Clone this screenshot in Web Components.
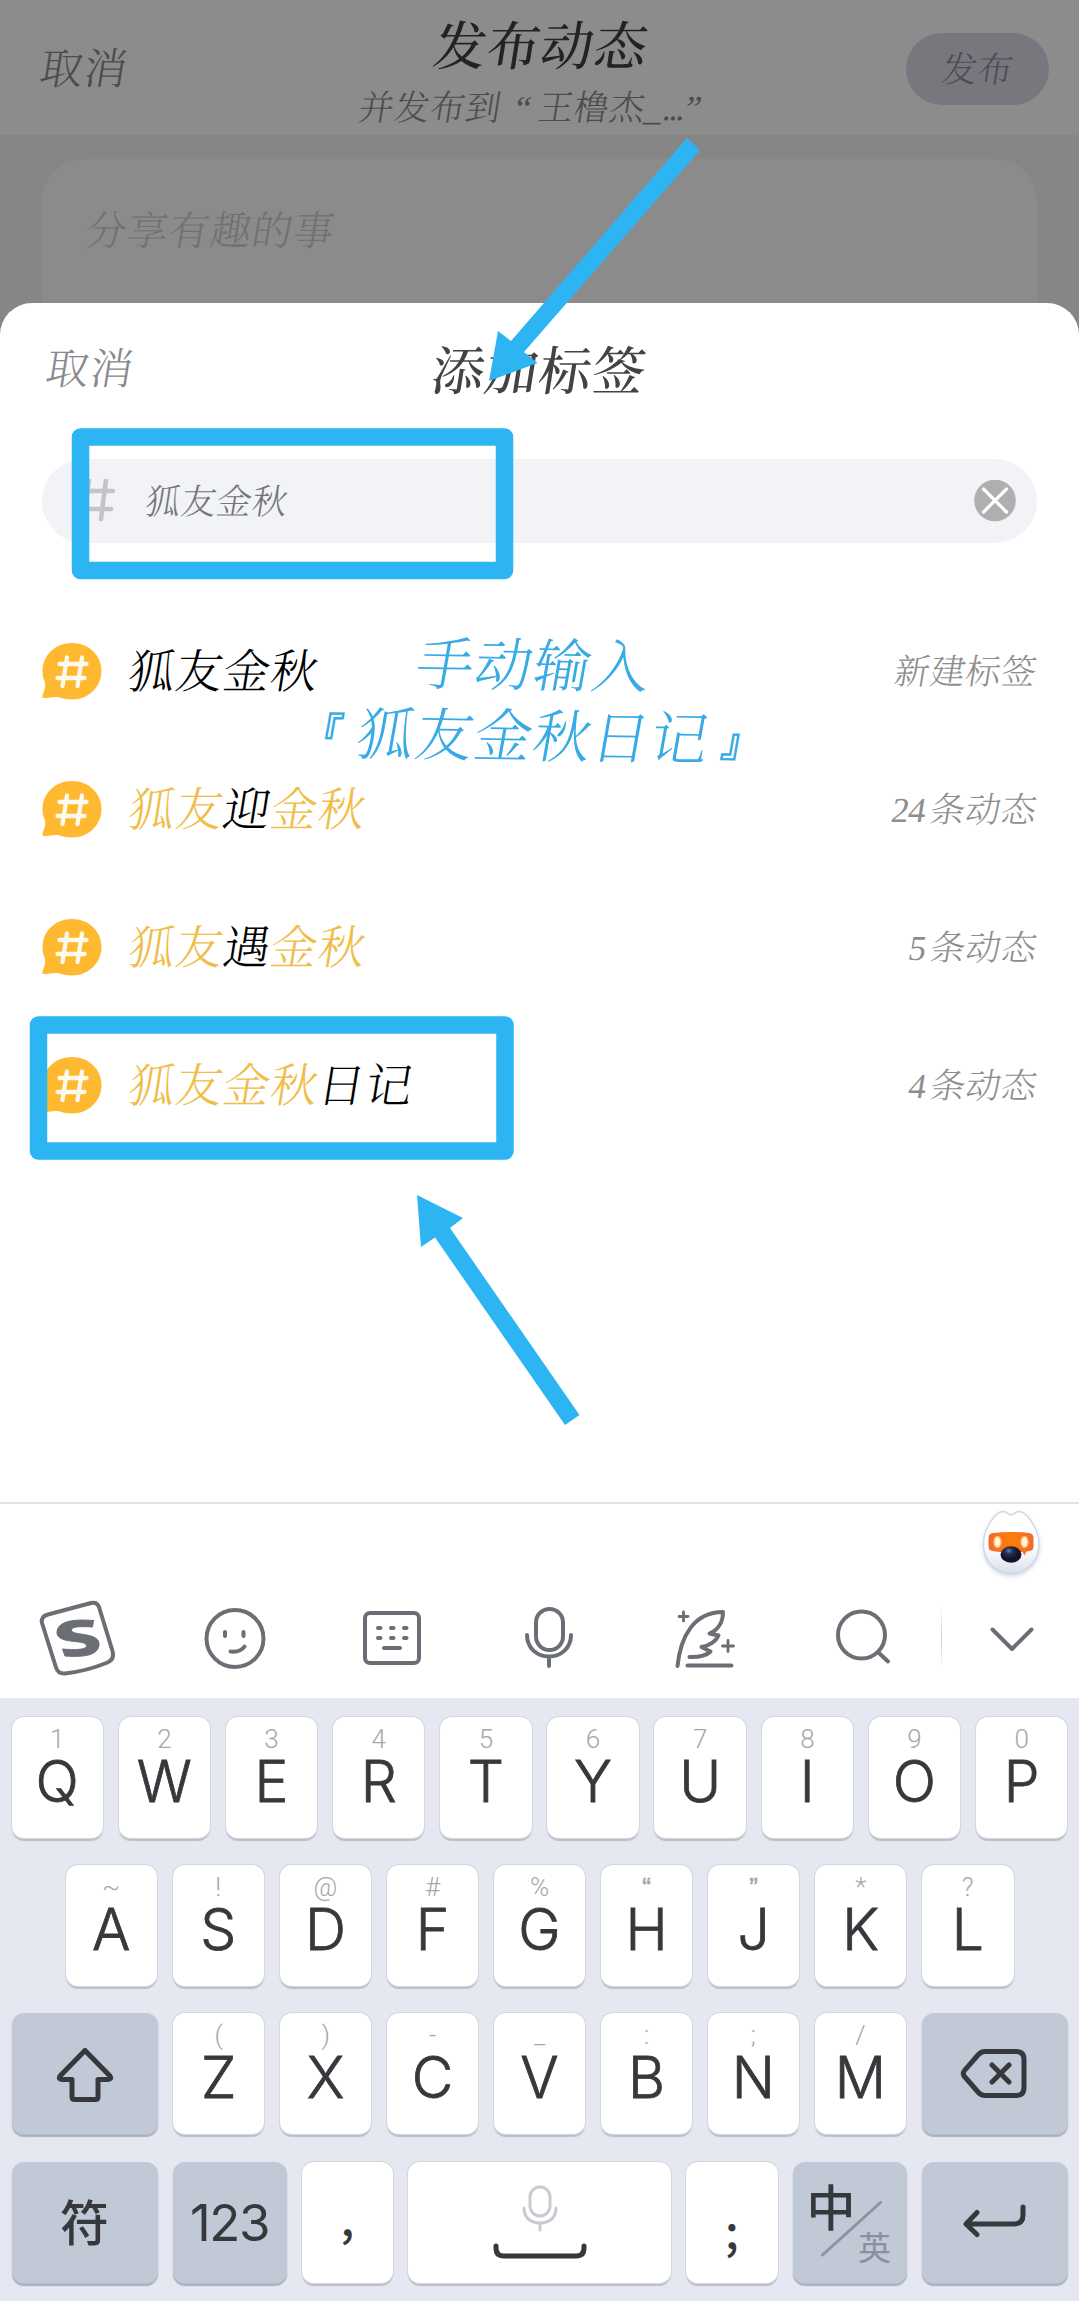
<!DOCTYPE html>
<html lang="zh-CN">
<head>
<meta charset="utf-8">
<title>添加标签</title>
<style>
html,body{margin:0;padding:0}
body{width:1079px;height:2301px;overflow:hidden;background:#fff;
 font-family:"Liberation Serif","Noto Serif CJK SC","Noto Sans CJK SC",serif;font-weight:300}
</style>
</head>
<body>
<tag-app></tag-app>
<script>
const define=(name,html)=>{
  const t=document.createElement('template');t.innerHTML=html;
  customElements.define(name,class extends HTMLElement{
    constructor(){super();this.attachShadow({mode:'open'}).append(t.content.cloneNode(true));}
  });
};

define('post-header',`<style>
:host{display:flex;height:135px;background:#8c8c8c;box-sizing:border-box;padding:0 30px 0 40px;justify-content:space-between}
.cancel{width:143px;height:50px;font-size:43px;letter-spacing:1px;line-height:50px;margin-top:45px;color:#4b4c4e;white-space:nowrap;transform:skewX(-9deg)}
.mid{display:flex;flex-direction:column;align-items:center;white-space:nowrap;margin-left:-6px}
h1{margin:17px 0 0;font-size:52.5px;letter-spacing:1px;line-height:60px;font-weight:500;color:#232325;transform:skewX(-9deg)}
p{margin:13px 0 0 -10px;font-size:35px;letter-spacing:.6px;line-height:38px;color:#4b4c4e;width:356px;display:flex;transform:skewX(-9deg)}
.q1{width:30px;padding-right:7px;text-align:right}.q2{padding-left:2px}
.dots{letter-spacing:-2px}
button{all:unset;width:143px;height:72px;border-radius:36px;background:#79777e;margin-top:33px;text-align:center;font-size:35.5px;line-height:74px;color:#4d4b54}
button span{display:block;transform:skewX(-9deg)}
</style>
<span class="cancel">取消</span>
<div class="mid"><h1>发布动态</h1><p><span>并发布到</span><span class="q1">“</span><span>王橹杰</span><span>_</span><span class="dots">...</span><span class="q2">”</span></p></div>
<button><span>发布</span></button>`);

define('post-draft',`<style>
:host{display:block;height:210px;background:#868686;box-sizing:border-box;padding:24px 42px 0}
div{height:186px;border-radius:42px 42px 0 0;background:#8b8b8b;box-sizing:border-box;padding:48px 44px 0}
p{margin:0;font-size:40.500px;letter-spacing:1px;line-height:50px;color:#717174;transform:skewX(-9deg)}
</style><div><p>分享有趣的事</p></div>`);

define('sheet-header',`<style>
:host{display:flex;justify-content:space-between;height:156px;padding:0 46px}
span{width:150px;height:50px;font-size:43px;letter-spacing:1px;line-height:50px;margin-top:42px;color:#88898c;transform:skewX(-9deg)}
h2{margin:39px 0 0;height:60px;font-size:52.5px;letter-spacing:1px;line-height:60px;font-weight:500;color:#424346;transform:skewX(-9deg)}
</style><span>取消</span><h2>添加标签</h2><span></span>`);

define('tag-input',`<style>
:host{display:flex;align-items:center;height:84px;margin:0 42px;border-radius:42px;background:#f1f3f7;box-sizing:border-box;padding:0 21px 0 30px}
.t{flex:1;font-size:35px;letter-spacing:.5px;line-height:50px;padding:3px 0 0 30px;transform:skewX(-9deg);color:#75767a}
svg{display:block}
</style>
<svg width="44" height="44" viewBox="0 0 44 44" fill="none" stroke="#c3c4c8" stroke-width="4.500" stroke-linecap="round"><path d="M17 1l-5 39M34 1l-5 39M5 12h36M2 30h37"/></svg>
<span class="t"><slot></slot></span>
<svg width="42" height="42" viewBox="0 0 42 42"><circle cx="21" cy="20.500" r="20.800" fill="#afafaf"/><path d="M9.500 9l23 23M32.500 9l-23 23" stroke="#fff" stroke-width="3.200" stroke-linecap="round"/></svg>`);

define('tag-row',`<style>
:host{display:flex;align-items:center;height:138.100px;padding:0 42px 0 41.500px}
svg{display:block;width:60px;height:57px}
.name{flex:1;padding-left:27px;font-size:46.500px;letter-spacing:.9px;line-height:60px;padding-top:3px;color:#000;transform:skewX(-9deg)}
.count{font-size:35px;letter-spacing:.5px;line-height:50px;padding-top:3px;color:#8d8d90;display:flex;gap:5px;transform:skewX(-9deg)}
::slotted([slot=n]){letter-spacing:-.8px}
::slotted(b){font-weight:inherit;color:#f0bd48}
</style>
<svg viewBox="0 0 60 57"><path d="M30 0C47 0 59.500 12.500 59.500 28S47 56.500 30 56.500c-6 0-10-1-14-2.500C11 53.500 7 55 2 55c-2 0-2-2-1-4C3 46 4 43 2.500 38 1 35 .5 32 .5 28 .5 12.500 13 0 30 0z" fill="#ffb931"/><path d="M25 14.500l-4.500 28.500M40 14.500L35.500 43M17.500 21h27M15.500 35h27" stroke="#fffaf0" stroke-width="4.300" stroke-linecap="round" fill="none"/></svg>
<span class="name"><slot></slot></span><span class="count"><slot name="n"></slot><slot name="unit"></slot></span>`);

define('ime-tools',`<style>
:host{display:block;height:196px;background:#fff;border-top:2px solid #dfe5e6;box-sizing:border-box}
.top{height:79px;display:flex;justify-content:flex-end;padding-right:30px;box-sizing:border-box}
.bar{display:flex;height:112px;align-items:center;margin-left:-1px}
.bar>div{width:157px;display:flex;justify-content:center}
svg{display:block;fill:none;stroke:#6b6f75;stroke-width:4;stroke-linecap:round;stroke-linejoin:round}
i{width:1px;height:68px;margin-bottom:2px;background:linear-gradient(#fff,#cfd0d3,#fff)}
.bar>.end{flex:1;width:auto}
</style>
<div class="top"><svg width="76" height="80" viewBox="973 1504.500 76 80" style="stroke:none">
<defs><linearGradient id="f" x2="0" y2="1"><stop offset=".55" stop-color="#fff"/><stop offset="1" stop-color="#d9dfed"/></linearGradient><linearGradient id="o"><stop stop-color="#f06a35"/><stop offset=".5" stop-color="#ff7d05"/><stop offset="1" stop-color="#f06a35"/></linearGradient><radialGradient id="n" cx=".4" cy=".28"><stop stop-color="#777b9d"/><stop offset=".4" stop-color="#272c50"/><stop offset="1" stop-color="#111329"/></radialGradient></defs>
<path d="M1003 1512c4 0 5 3.500 8 3.500s4-3.500 8-3.500c7 0 20 17 20 33s-12 29-28 29-27.500-13-27.500-29 12-33 19.500-33z" fill="url(#f)" stroke="#d3d5dc" stroke-width="1.300" style="filter:drop-shadow(0 2px 2px #cbd7ee)"/>
<path d="M993 1533.500c12-1.300 24-1.300 36 0q4.500.5 4.500 5v8.500q0 4-4 4.500l-3 .5-2 4-2-3.500h-23l-7-1q-4-.5-4-4.500v-8.500q0-4.500 4.500-5z" fill="url(#o)"/>
<ellipse cx="997.500" cy="1542.500" rx="3.600" ry="5.500" fill="#fff6d8" stroke="#ffb35c" stroke-width="1.500"/><ellipse cx="1024.500" cy="1542.500" rx="3.600" ry="5.500" fill="#fff6d8" stroke="#ffb35c" stroke-width="1.500"/>
<ellipse cx="1011" cy="1555" rx="10.500" ry="8.300" fill="url(#n)"/></svg></div>
<div class="bar">
<div><svg width="84" height="84" viewBox="36 1597 84 84"><path d="M48 1614.500L91 1603q6-1.500 8 4l13.500 44q2.500 8-5 11.500Q87 1671 65 1673.500q-7 .5-9-6L42 1623q-1.500-6.500 6-8.500z"/><path d="M93.500 1620.500l-1 6.500c-9-.5-20-1-21 2.500-1 4 8 4 15 5.500 8 1.500 12.500 4 12.500 9 0 11-14 13.500-34 12l-2.500-7c12 1 24.500 1 24-3.500-.5-3.500-9-3.500-16-4.500-8-1-14-3.500-13.500-9 1-11.500 18-13 36.500-11.500z" fill="#6b6f75" stroke="#6b6f75" stroke-width="1"/></svg></div>
<div><svg width="84" height="84" viewBox="192 1597 84 84"><circle cx="234" cy="1638.500" r="28.500"/><path d="M224 1632v4M242.500 1632v4M229.500 1651.500q10 1 14-5"/></svg></div>
<div><svg width="84" height="84" viewBox="349.500 1597 84 84"><rect x="364.500" y="1613" width="54" height="50" rx="5"/><path d="M377.500 1628h2.500M390.500 1628h2.500M403.500 1628h2.500M377.500 1638h2.500M390.500 1638h2.500M403.500 1638h2.500M383.500 1648h16"/></svg></div>
<div><svg width="84" height="84" viewBox="506.500 1597 84 84"><rect x="535.500" y="1609" width="27" height="41" rx="13.500"/><path d="M526.500 1635c0 13 10 21.500 22 21.500s22-8.500 22-21.500M548.500 1657v9"/></svg></div>
<div><svg width="84" height="84" viewBox="664.500 1597 84 84"><path d="M678 1666c3-29 16-54 45.500-54 0 10-5 18-13.500 21.500l9 2q-4 9-17 11.500l9 4.500q-6 6-21 5.500M688 1665.500h44"/><path d="M684 1612v9M679.500 1616.500h9M728.500 1640.500v11M723 1646h11" stroke-width="2.800"/></svg></div>
<div><svg width="84" height="84" viewBox="820 1597 84 84"><circle cx="860.500" cy="1635" r="23.500"/><path d="M878 1653l9 8.500"/></svg></div>
<i></i>
<div class="end"><svg width="84" height="84" viewBox="969 1597 84 84"><path d="M992.500 1629.500l19.500 19.500 19.500-19.500"/></svg></div>
</div>`);

define('ime-key',`<style>
:host{display:flex;flex-direction:column;align-items:center;width:91.500px;height:121px;flex:none;border-radius:12px;background:#fff;box-shadow:0 0 0 1px #d3d6de,0 3px 1px #bbbfc9;box-sizing:border-box;color:#36383c;font-family:Inter,"Noto Sans CJK SC",sans-serif;font-weight:400;font-size:57px;line-height:56px}
:host([grey]){background:#c1c8d6;box-shadow:0 1px 1px #b9c0ce,0 3px 1px #aab0bd}
:host([wide]){width:146px}:host([mid]){width:114px}:host([space]){width:263px}
.h{font-family:Roboto,sans-serif;font-size:26px;line-height:28px;height:28px;padding-top:8px;color:#a6a7aa;font-weight:300}
.m{display:block;height:56px;margin-top:1px;white-space:nowrap;font-weight:300;-webkit-text-stroke:.8px #36383c}
:host([plain]){justify-content:center}
:host([plain]) .h{display:none}:host([plain]) .m{margin:0;height:auto;font-weight:400;-webkit-text-stroke:0}
::slotted(svg){display:block}
::slotted(.quote){font-family:"Liberation Sans",sans-serif;-webkit-text-stroke:.6px #a6a7aa}
</style><span class="h"><slot name="hint"></slot></span><span class="m"><slot></slot></span>`);

define('ime-keys',`<style>
:host{display:flex;flex-direction:column;gap:27.400px;height:603px;background:#e5e8f0;box-sizing:border-box;padding:18.500px 11.500px 0 11.500px}
.r{display:flex;justify-content:space-between;height:121px}
.two{padding:0 54px}
svg{fill:none;stroke:#36383c;stroke-width:5;stroke-linecap:round;stroke-linejoin:round}
.pun{font-family:"Noto Sans CJK SC",sans-serif;display:block;font-size:46px;line-height:60px;font-weight:500}
.fu{font-size:49px;display:block;line-height:54px;padding-top:3px;font-weight:500}
.num{font-size:51px;letter-spacing:-1.500px}
</style>
<div class="r" id="a"></div><div class="r two" id="b"></div>
<div class="r" id="c"><ime-key grey wide plain><svg width="60" height="60" viewBox="0 0 60 60"><path d="M30 6.500L55 32q2 3.500-2 3.500H43V53q0 2.500-2.500 2.500h-21Q17 55.500 17 53V35.500H7q-4 0-2-3.500z"/></svg></ime-key></div>
<div class="r">
<ime-key grey wide plain><span class="fu">符</span></ime-key>
<ime-key grey mid plain><span class="num">123</span></ime-key>
<ime-key plain><span class="pun" style="margin-top:-12px">,</span></ime-key>
<ime-key space plain><svg width="100" height="121" viewBox="490 2162 100 121"><g stroke="#c8cbd2" stroke-width="3"><rect x="530" y="2187" width="20" height="29" rx="10"/><path d="M524 2208c0 10 7 15 16 15s16-5 16-15M540 2224v6"/></g><path d="M496 2246v2q0 8 8 8h72q8 0 8-8v-2"/></svg></ime-key>
<ime-key plain><span class="pun" style="padding-top:13px">;</span></ime-key>
<ime-key grey mid plain><svg width="114" height="121" viewBox="794 2162 114 121" font-family="Noto Sans CJK SC, sans-serif"><path d="M823.500 2255l58-52.500" stroke="#8d929e" stroke-width="3"/><g stroke="none"><text x="807.500" y="2226" font-size="49" font-weight="500" fill="#36383c">中</text><text x="859" y="2260" font-size="33" fill="#8b909c">英</text></g></svg></ime-key>
<ime-key grey wide plain><svg width="76" height="60" viewBox="957 2193 76 60"><path d="M1023 2208v8q0 9-9 9h-47M977 2213.500l-11 11.500 11 10.500"/></svg></ime-key>
</div>`);

class ImeBoard extends HTMLElement{
  constructor(){
    super();
    this.attachShadow({mode:'open'}).innerHTML='<style>:host{display:block}</style><ime-tools></ime-tools><ime-keys></ime-keys>';
    const root=this.shadowRoot.querySelector('ime-keys').shadowRoot;
    const fill=(id,letters,hints)=>[...letters].forEach((l,i)=>{
      const k=document.createElement('ime-key');
      const h=document.createElement('span');h.slot='hint';h.textContent=[...hints][i];
      if('“”'.includes(h.textContent))h.className='quote';
      k.append(h,l);root.getElementById(id).append(k);
    });
    fill('a','QWERTYUIOP','1234567890');
    fill('b','ASDFGHJKL','~!@#%“”*?');
    fill('c','ZXCVBNM','()-_:;/');
    const del=document.createElement('ime-key');
    for(const a of ['grey','wide','plain'])del.setAttribute(a,'');
    del.innerHTML='<svg width="70" height="60" viewBox="0 0 70 60"><path d="M25 7.500h31q8 0 8 8v28q0 8-8 8H25q-4 0-7-3.500L4.500 32.500q-2.500-3 0-6L18 11q3-3.500 7-3.500zM32 21l17 17M49 21l-17 17"/></svg>';
    root.getElementById('c').append(del);
  }
}
customElements.define('ime-board',ImeBoard);

define('mark-layer',`<style>
:host{position:absolute;inset:0;pointer-events:none}
svg{position:absolute;inset:0;fill:#2cb5f2}
.note{position:absolute;left:300px;top:630.500px;width:460px;font-size:57.500px;letter-spacing:1.200px;line-height:71px;color:#38aae6;white-space:nowrap;transform:rotate(.9deg);transform-origin:50% 50%}
.note span{display:block;transform:skewX(-9deg)}
.l1{padding-left:116px}
.note .l2{display:flex;margin-left:2px}
.l2 b{flex:none;font-size:40px;font-weight:700;width:56px;position:relative;top:-1px;-webkit-text-stroke:1.200px #38aae6}
.l2 b:last-child{margin-left:13px;top:2px}
</style>
<svg width="1079" height="2301" viewBox="0 0 1079 2301">
<path d="M687 138L700 150 524 352 537.500 363 489 381 498 331 511 341z"/>
<path d="M417 1195l46 23-13 10 129.500 187-14.500 10-130-187.500-14 9.500z"/>
<g fill="none" stroke="#2cb5f2" stroke-width="17.500"><path d="M80.500 437h424v133.500h-424z" stroke-linejoin="round"/><path d="M38.500 1025H505v126H38.500z" stroke-linejoin="round"/></g>
</svg>
<div class="note"><span class="l1">手动输入</span><span class="l2"><b>『</b>狐友金秋日记<b>』</b></span></div>`);

define('tag-app',`<style>
:host{display:block;position:relative;width:1079px;height:2301px;overflow:hidden;background:#868686}
.under{height:303px;overflow:hidden}
.sheet{height:1199px;background:#fff;border-radius:32px 32px 0 0;overflow:hidden}
.list{padding-top:59px}
.page{display:flex;flex-direction:column}
</style>
<div class="page"><div class="under"><post-header></post-header><post-draft></post-draft></div>
<div class="sheet"><sheet-header></sheet-header><tag-input>狐友金秋</tag-input>
<div class="list">
<tag-row>狐友金秋<span slot="unit">新建标签</span></tag-row>
<tag-row><b>狐友</b>迎<b>金秋</b><span slot="n">24</span><span slot="unit">条动态</span></tag-row>
<tag-row><b>狐友</b>遇<b>金秋</b><span slot="n">5</span><span slot="unit">条动态</span></tag-row>
<tag-row><b>狐友金秋</b>日记<span slot="n">4</span><span slot="unit">条动态</span></tag-row>
</div></div>
<ime-board></ime-board></div>
<mark-layer></mark-layer>`);
</script>
</body>
</html>
